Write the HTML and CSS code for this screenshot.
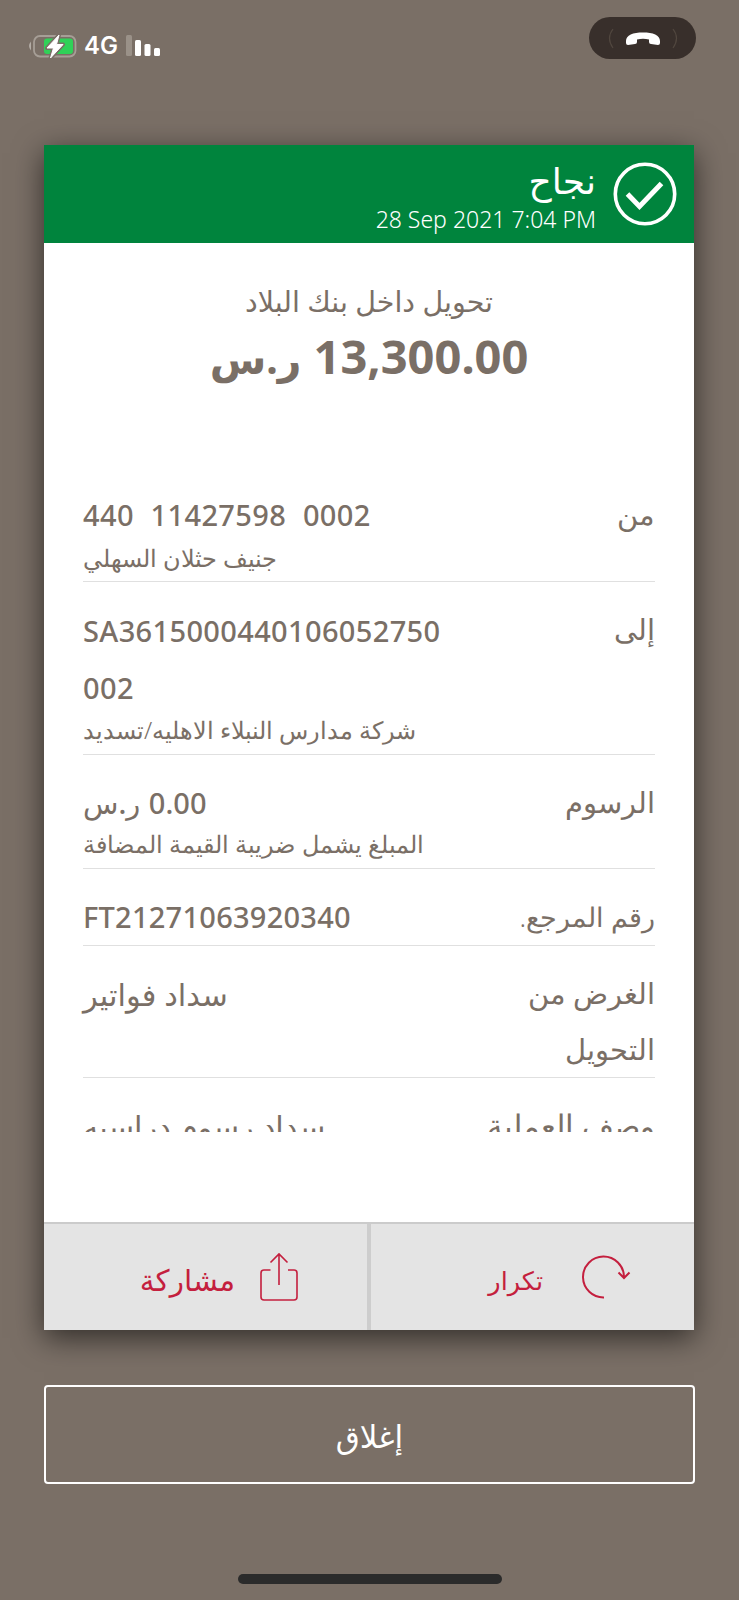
FILE: index.html
```html
<!DOCTYPE html>
<html lang="ar" dir="rtl">
<head>
  <meta charset="UTF-8" />
  <title>نجاح</title>
  <link rel="stylesheet" href="styles.css">
</head>
<body>
  <div class="status-bar">
    <div class="call-pill">
      <svg width="72" height="24" viewBox="0 0 72 24">
        <path d="M6 3Q-1 12 6 22M66 3Q73 12 66 22" fill="none" stroke="#51473f" stroke-width="1.2"/>
        <path d="M19 15C19 9 26 6.500 36 6.500S53 9 53 15V17Q53 19 51 19L44 18Q42 18 42 16V13.500Q36 12 30 13.500V16Q30 18 28 18L21 19Q19 19 19 17Z" fill="#fff"/>
      </svg>
    </div>
    <div class="signals">
      <svg class="bars" width="34" height="22" viewBox="0 0 34 22">
        <rect x="0" y="0" width="6" height="21" rx="1.500" fill="#9a9188"/>
        <rect x="9" y="5" width="6" height="16" rx="1.500" fill="#fff"/>
        <rect x="18.500" y="9" width="6" height="12" rx="1.500" fill="#fff"/>
        <rect x="28" y="13" width="6" height="8" rx="1.500" fill="#fff"/>
      </svg>
      <span class="network">4G</span>
      <svg class="battery" width="49" height="28" viewBox="0 0 49 28">
        <path d="M3 9.500Q-1 14 3 18.500Z" fill="#b3aca5"/>
        <rect x="6" y="4" width="41.500" height="20.500" rx="6" fill="none" stroke="#a69e96" stroke-width="1.800"/>
        <rect x="16" y="6.500" width="29" height="15.500" rx="3" fill="#30d158"/>
        <path d="M31 3L19 16H25.500L22.500 26L35 12.500H28.500Z" fill="#fff" stroke="#7a6f66" stroke-width="4" stroke-linejoin="round"/>
        <path d="M31 3L19 16H25.500L22.500 26L35 12.500H28.500Z" fill="#fff" stroke="#fff" stroke-linejoin="round"/>
      </svg>
    </div>
  </div>

  <div class="card">
    <div class="card-header">
      <svg class="check" width="64" height="64" viewBox="0 0 64 64" fill="none" stroke="#fff">
        <circle cx="32" cy="32" r="29.700" stroke-width="3.600"/>
        <path d="M14.500 32L26.500 44.500L48.500 21.500" stroke-width="5"/>
      </svg>
      <div class="header-text">
        <h1>نجاح</h1>
        <p class="date" dir="ltr">28 Sep 2021 7:04 PM</p>
      </div>
    </div>

    <div class="summary">
      <p class="type">تحويل داخل بنك البلاد</p>
      <p class="amount">13,300.00 <span class="currency">ر.س</span></p>
    </div>

    <div class="details">
      <div class="row">
        <div class="label">من</div>
        <div class="value">
          <bdi class="number account" dir="ltr">440  11427598  0002</bdi>
          <p class="note">جنيف حثلان السهلي</p>
        </div>
      </div>
      <div class="row">
        <div class="label">إلى</div>
        <div class="value">
          <bdi class="number iban" dir="ltr">SA3615000440106052750<br>002</bdi>
          <p class="note beneficiary">شركة مدارس النبلاء الاهليه/تسديد</p>
        </div>
      </div>
      <div class="row">
        <div class="label">الرسوم</div>
        <div class="value">
          <div class="number fee">0.00 <span class="fee-currency">ر.س</span></div>
          <p class="note tax">المبلغ يشمل ضريبة القيمة المضافة</p>
        </div>
      </div>
      <div class="row">
        <div class="label reference-label">رقم المرجع.</div>
        <div class="value"><bdi class="number reference" dir="ltr">FT21271063920340</bdi></div>
      </div>
      <div class="row">
        <div class="label">الغرض من<br>التحويل</div>
        <div class="value arabic">سداد فواتير</div>
      </div>
      <div class="row">
        <div class="label description-label">وصف العملية</div>
        <div class="value arabic">سداد رسوم دراسيه</div>
      </div>
    </div>

    <div class="actions">
      <div class="action repeat">
        <svg width="50" height="48" viewBox="0 0 50 48" fill="none" stroke="#c41f3e" stroke-width="2">
          <path d="M23 44.500A20.500 20.500 0 1 1 43 24V25M37.500 19.500L43 25L48.500 19.500"/>
        </svg>
        <span>تكرار</span>
      </div>
      <div class="action share">
        <svg width="38" height="50" viewBox="0 0 38 50" fill="none" stroke="#c41f3e" stroke-width="1.600">
          <path d="M10.500 18H4Q1 18 1 21V45Q1 48 4 48H34Q37 48 37 45V21Q37 18 34 18H28M19 33V2M10.500 10.500L19 2L27.500 10.500"/>
        </svg>
        <span>مشاركة</span>
      </div>
    </div>
  </div>

  <button class="close" type="button">إغلاق</button>
  <div class="home-indicator"></div>
</body>
</html>
```
FILE: styles.css
```css
body {
  margin: 0;
  height: 1600px;
  overflow: hidden;
  display: flex;
  flex-direction: column;
  background-color: #7a6f66;
  color: #7a6f66;
  font-family: "Noto Sans", "DejaVu Sans", sans-serif;
}
h1, p {
  margin: 0;
  font-weight: normal;
}
svg {
  display: block;
  flex: none;
}

.status-bar {
  height: 128px;
  padding: 17px 43px 0 28px;
  display: flex;
  justify-content: space-between;
  align-items: flex-start;
}
.call-pill {
  width: 107px;
  height: 42px;
  border-radius: 21px;
  background: #382f2b;
  display: flex;
  align-items: center;
  justify-content: center;
}
.signals {
  display: flex;
  align-items: center;
  padding-top: 14px;
}
.bars {
  margin: 1px 0 0 8px;
}
.network {
  color: #fff;
  font: 600 24px/28px Inter, sans-serif;
  margin: 1px 0 0 7px;
}

.card {
  width: 650px;
  height: 1185px;
  margin-right: 45px;
  display: flex;
  flex-direction: column;
  background: #fff;
  box-shadow: 0 8px 28px rgba(0, 0, 0, 0.6);
}
.card-header {
  height: 98px;
  box-sizing: border-box;
  padding: 17px 17px 0;
  display: flex;
  gap: 17px;
  background: #00843d;
  color: #fff;
}
h1 {
  font-size: 36px;
  line-height: 38px;
  padding-bottom: 4px;
}
.date {
  font-size: 23px;
  line-height: 30px;
  font-weight: 300;
}

.summary {
  height: 224px;
  padding-top: 37px;
  box-sizing: border-box;
  text-align: center;
}
.type {
  font-size: 28.5px;
  line-height: 42px;
}
.amount {
  font-size: 47px;
  line-height: 68px;
  font-weight: bold;
}
.currency {
  font-size: 41px;
}

.details {
  height: 665px;
  overflow: hidden;
  padding: 0 39px;
}
.row {
  display: flex;
  justify-content: space-between;
  padding-top: 20px;
  border-bottom: 1px solid #e0e0e0;
}
.label {
  font-size: 28.5px;
  line-height: 55.5px;
  font-weight: 300;
}
.reference-label {
  font-size: 27px;
}
.description-label {
  font-size: 31px;
}
.value {
  text-align: left;
  font-weight: 500;
}
.number {
  display: block;
  font-size: 29px;
  line-height: 56px;
  letter-spacing: 0.35px;
  white-space: pre;
}
.account {
  padding-bottom: 1px;
  word-spacing: 0.5px;
}
.iban {
  line-height: 57px;
}
.fee {
  line-height: 55px;
  word-spacing: 1px;
}
.fee-currency {
  font-size: 29px;
}
.reference {
  letter-spacing: 0.25px;
}
.note {
  height: 37px;
  font-size: 23.8px;
  line-height: 28px;
  font-weight: 300;
}
.beneficiary {
  height: 38px;
  font-size: 23.5px;
}
.tax {
  height: 38px;
}
.arabic {
  font-size: 30.5px;
  line-height: 56px;
}

.actions {
  margin-top: auto;
  height: 108px;
  box-sizing: border-box;
  border-top: 2px solid #cbcbcb;
  display: flex;
  background: #e4e4e4;
  color: #c41f3e;
}
.action {
  box-sizing: border-box;
  display: flex;
  align-items: center;
}
.action span {
  padding-top: 5px;
}
.repeat {
  width: 327px;
  border-left: 4px solid #cdcdcd;
  padding-right: 63px;
  gap: 38px;
  font-size: 25.5px;
}
.share {
  width: 323px;
  padding-right: 69px;
  gap: 25px;
  font-size: 29.5px;
}

.close {
  width: 651px;
  height: 99px;
  margin: 55px 44px 0 0;
  padding: 2px 0 0;
  border: 2px solid #fff;
  border-radius: 4px;
  background: none;
  color: #fff;
  font: 31px "Noto Sans", "DejaVu Sans", sans-serif;
}
.home-indicator {
  width: 264px;
  height: 10px;
  margin: 90px auto 0;
  border-radius: 5px;
  background: #2b2b2b;
}
```
